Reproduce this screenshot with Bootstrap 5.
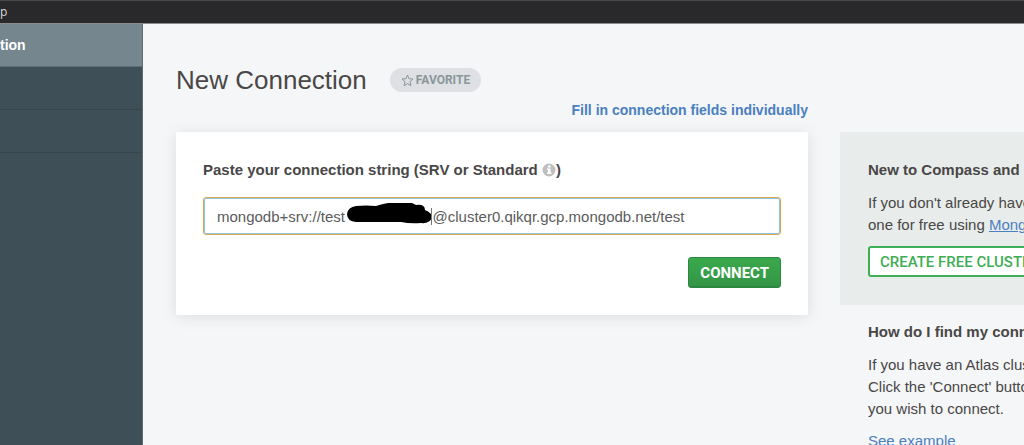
<!DOCTYPE html>
<html lang="en">
<head>
<meta charset="utf-8">
<meta name="viewport" content="width=device-width, initial-scale=1">
<title>New Connection</title>
<link href="https://cdn.jsdelivr.net/npm/bootstrap@5.3.0/dist/css/bootstrap.min.css" rel="stylesheet">
<style>
  body { font: 15px/22px "Liberation Sans", Arial, sans-serif; color: #494747; background: #f5f6f7; }
  a { color: #4a7fc0; }
  .menu-strip { height: 24px; background: #29292b; border-top: 1px solid #4a4848; border-bottom: 1px solid #8a8c8e; color: #d8d8d8; font-family: "Open Sans", sans-serif; font-size: 12px; }
  .side { width: 143px; background: #3f4f57; border-right: 1px solid #5c6b73; }
  .side-item { height: 43px; border-bottom: 1px solid #37464d; }
  .side-item.current { background: #76868f; border-color: #5f6f78; color: #fff; font-weight: 700; font-size: 14px; }
  .page-title { font-size: 26px; line-height: 32px; font-weight: 400; }
  .page-head { padding: 40px 0 0 33px; gap: 23px; }
  .fav { height: 24px; padding: 0 11px; border: 0; background: #dee0e3; color: #89979b; font-family: Roboto, sans-serif; font-size: 12px; line-height: 24px; font-weight: 700; gap: 2px; }
  .switch-row { height: 36px; padding-top: 3px; font-size: 14px; }
  .content-row { padding-left: 33px; gap: 32px; }
  .aside { width: 184px; white-space: nowrap; }
  .panel { padding: 27px; background: #fff; box-shadow: 0 2px 14px rgba(0,0,0,.1); }
  .uri, .uri:focus { height: 38px; padding: 0 13px; border: 1px solid #d9a94a; border-radius: 3px; box-shadow: inset 0 0 0 1px #8cc4ea; color: #5b5b5b; font-size: 15px; }
  .scribble { left: 143px; top: 6px; pointer-events: none; }
  .go, .create { height: 31px; border-radius: 3px; font-family: Roboto, sans-serif; font-size: 15px; }
  .go { padding: 0 11px; border: 1px solid #2d8740; background: linear-gradient(#3aa94c, #349546); box-shadow: inset 0 -1px 0 #2d8740; color: #fff; line-height: 28px; font-weight: 700; }
  .actions { margin-top: 22px; line-height: 0; }
  .promo { height: 173px; padding: 27px 0 0 28px; background: #e8edeb; }
  .help { padding: 16px 0 0 28px; }
  .aside-title { font-size: 15px; line-height: 22px; font-weight: 700; margin-bottom: 11px; }
  .aside-text { margin-bottom: 10px; }
  .create { padding: 0 10px; border: 2px solid #3fb055; background: #fff; color: #3fad55; line-height: 26px; font-weight: 500; }
</style>
</head>
<body class="vh-100 overflow-hidden d-flex flex-column">
  <header class="menu-strip flex-shrink-0">p</header>
  <div class="d-flex flex-grow-1 overflow-hidden">
    <nav class="side flex-shrink-0" aria-label="Connections">
      <div class="side-item current d-flex align-items-center">tion</div>
      <div class="side-item"></div>
      <div class="side-item"></div>
    </nav>
    <main class="flex-grow-1 overflow-hidden">
      <div class="page-head d-flex align-items-center">
        <h1 class="page-title mb-0">New Connection</h1>
        <button type="button" class="fav rounded-pill d-flex align-items-center">
          <svg width="13" height="13" viewBox="0 0 13 13" fill="none" stroke="currentColor" stroke-linejoin="round" aria-hidden="true"><path d="M6.5 1 8 4.700l4 .3-3 2.700.9 4-3.400-2.100-3.400 2.100.9-4L1 5l4-.3z"/></svg>
          FAVORITE
        </button>
      </div>
      <div class="content-row d-flex">
        <div class="flex-grow-1">
          <div class="switch-row text-end"><a href="#" class="fw-bold text-decoration-none">Fill in connection fields individually</a></div>
          <form class="panel">
            <label for="uri" class="fw-bold d-block mb-3">Paste your connection string (SRV or Standard
              <svg class="align-text-bottom" width="14" height="16" viewBox="0 0 14 16" aria-hidden="true"><circle cx="7" cy="8" r="6.500" fill="#bfbfbf"/><path d="M6 3.500h2.500v2H6zM5 6.500h3.500v4H9.500v1.500H5v-1.500h1V8H5z" fill="#fff"/></svg>)</label>
            <div class="position-relative">
              <input id="uri" type="text" class="uri form-control" spellcheck="false" value="mongodb+srv://test&nbsp;&nbsp;&nbsp;&nbsp;&nbsp;&nbsp;&nbsp;&nbsp;&nbsp;&nbsp;&nbsp;&nbsp;&nbsp;&nbsp;&nbsp;&nbsp;&nbsp;&nbsp;&nbsp;&nbsp;&nbsp;@cluster0.qikqr.gcp.mongodb.net/test">
              <svg class="scribble position-absolute" width="87" height="24" viewBox="0 0 87 24" aria-hidden="true"><path d="M10 3Q20 2 30 3Q42-1 54-1Q64-2 70 2Q79 1 79 7Q86 10 86 14Q84 21 75 20Q65 21 55 19H10Q1 18 1 11Q2 4 10 3Z"/><path d="M85.500 5v17" stroke="#777"/></svg>
            </div>
            <div class="actions text-end"><button type="button" class="go">CONNECT</button></div>
          </form>
        </div>
        <aside class="aside flex-shrink-0 overflow-hidden">
          <div class="switch-row"></div>
          <section class="promo">
            <h2 class="aside-title">New to Compass and don't</h2>
            <p class="aside-text">If you don't already have<br>one for free using <a href="#">MongoDB</a></p>
            <button type="button" class="create">CREATE FREE CLUSTER</button>
          </section>
          <section class="help">
            <h2 class="aside-title">How do I find my connection</h2>
            <p class="aside-text">If you have an Atlas cluster<br>Click the 'Connect' button<br>you wish to connect.</p>
            <a href="#" class="text-decoration-none">See example</a>
          </section>
        </aside>
      </div>
    </main>
  </div>
<script src="https://cdn.jsdelivr.net/npm/bootstrap@5.3.0/dist/js/bootstrap.bundle.min.js"></script>
</body>
</html>
